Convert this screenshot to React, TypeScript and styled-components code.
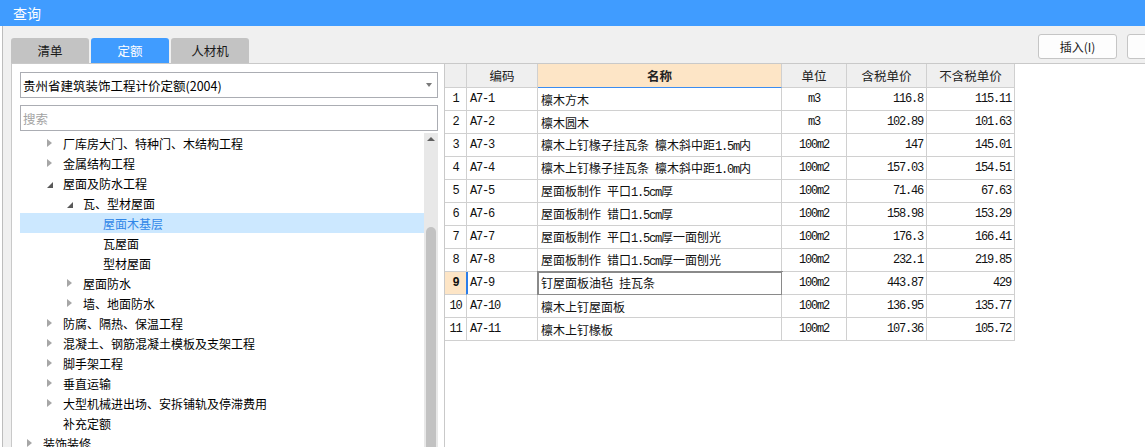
import React from "react";
import styled, { createGlobalStyle } from "styled-components";

const GlobalStyle = createGlobalStyle`
  html, body {
    margin: 0;
    padding: 0;
    background: #fff;
    overflow: hidden;
  }
  body {
    font-family: "Noto Sans CJK SC", "Noto Sans", sans-serif;
    font-size: 12px;
    color: #000;
  }
  * { box-sizing: border-box; }
`;

const Window = styled.div`
  width: 1210px;
  height: 447px;
  display: flex;
  flex-direction: column;
  overflow: hidden;
`;

const TitleBar = styled.div`
  flex: none;
  height: 26px;
  line-height: 26px;
  padding-left: 13px;
  background: #409cff;
  color: #fff;
  font-size: 14px;
`;

const Body = styled.div`
  flex: 1;
  min-height: 0;
  display: flex;
  margin-left: 2px;
  padding-left: 8px;
  border-left: 1px solid #bdbdbd;
  background: #f0f0f0;
`;

const LeftColumn = styled.div`
  flex: none;
  width: 434px;
  display: flex;
  flex-direction: column;
`;

const Tabs = styled.div`
  display: flex;
  gap: 2px;
  height: 25px;
  margin-top: 12px;
`;

const Tab = styled.div<{ $active?: boolean }>`
  width: 78px;
  display: flex;
  align-items: center;
  justify-content: center;
  border-radius: 3px 3px 0 0;
  background: ${(p) => (p.$active ? "#409cff" : "#c3c3c3")};
  color: ${(p) => (p.$active ? "#fff" : "#1a1a1a")};
  font-size: 12.5px;
`;

const Panel = styled.div`
  flex: 1;
  min-height: 0;
  display: flex;
  flex-direction: column;
  padding: 8px 6px 0 8px;
  background: #fff;
  border: 1px solid #c9c9c9;
  border-bottom: none;
`;

const Field = styled.div`
  flex: none;
  height: 26px;
  display: flex;
  align-items: center;
  justify-content: space-between;
  padding: 0 5px 0 2px;
  border: 1px solid #abadb3;
  font-size: 12.5px;
  & + & {
    margin-top: 7px;
  }
`;

const Placeholder = styled.span`
  color: #a3a3a3;
`;

const Tree = styled.div`
  flex: 1;
  min-height: 0;
  display: flex;
  margin-top: 2px;
  overflow: hidden;
`;

const TreeList = styled.div`
  flex: 1;
  min-width: 0;
`;

const TreeRow = styled.div<{ $level: number; $selected?: boolean }>`
  height: 20px;
  display: flex;
  align-items: center;
  padding-left: ${(p) => 3 + p.$level * 20}px;
  white-space: nowrap;
  background: ${(p) => (p.$selected ? "#cce8ff" : "transparent")};
  color: ${(p) => (p.$selected ? "#2f86e8" : "#000")};
`;

const Toggle = styled.span<{ $open?: boolean }>`
  flex: none;
  width: 20px;
  height: 20px;
  display: flex;
  align-items: center;
  padding-left: 4px;
  padding-top: ${(p) => (p.$open ? 4 : 0)}px;
`;

const ScrollTrack = styled.div`
  flex: none;
  width: 14px;
  display: flex;
  flex-direction: column;
  align-items: center;
  background: #e8e8e8;
`;

const ScrollThumb = styled.div`
  flex: 1;
  width: 10px;
  margin-top: 86px;
  border-radius: 5px 5px 0 0;
  background: #c2c2c2;
`;

const RightColumn = styled.div`
  flex: 1;
  min-width: 0;
  display: flex;
  flex-direction: column;
`;

const Toolbar = styled.div`
  flex: none;
  height: 37px;
  display: flex;
  justify-content: flex-end;
  align-items: flex-start;
  gap: 10px;
  padding: 8px 4px 0 0;
`;

const Button = styled.div`
  width: 79px;
  height: 25px;
  display: flex;
  align-items: center;
  justify-content: center;
  border: 1px solid #c5c5c5;
  border-radius: 3px;
  background: #fdfdfd;
  color: #1a1a1a;
  font-size: 12px;
`;

const TableArea = styled.div`
  flex: 1;
  background: #fff;
  border-top: 1px solid #c9c9c9;
`;

const Grid = styled.div`
  display: grid;
  grid-template-columns: 22px 71px 244px 65px 80px 88px;
  width: max-content;
`;

type Align = "left" | "center" | "right";

const HeadCell = styled.div<{ $hot?: boolean }>`
  height: 24px;
  display: flex;
  align-items: center;
  justify-content: center;
  border-right: 1px solid #d0d0d0;
  border-bottom: 1px solid ${(p) => (p.$hot ? "#3b8cf0" : "#d0d0d0")};
  background: ${(p) => (p.$hot ? "#fde5c6" : "#efefef")};
  font-size: 12.5px;
  font-weight: ${(p) => (p.$hot ? 700 : 400)};
  color: #222;
`;

const Cell = styled.div<{ $align?: Align; $mark?: boolean; $cursor?: boolean; $focus?: boolean }>`
  height: 23px;
  display: flex;
  align-items: center;
  justify-content: ${(p) => (p.$align === "right" ? "flex-end" : p.$align === "center" ? "center" : "flex-start")};
  padding: 0 3px;
  border-right: 1px solid ${(p) => (p.$mark ? "#2b7de9" : "#d0d0d0")};
  border-bottom: 1px solid #d0d0d0;
  background: ${(p) => (p.$mark ? "#fde5c6" : "#fff")};
  font-weight: ${(p) => (p.$mark ? 700 : 400)};
  box-shadow: ${(p) => (p.$cursor ? "inset 1px 0 0 #2b7de9" : "none")};
  outline: ${(p) => (p.$focus ? "2px solid #8a8a8a" : "none")};
  outline-offset: -1px;
  white-space: pre;
  overflow: hidden;
  font-size: 12px;
  color: #111;
`;

const Half = styled.span`
  font-family: "Liberation Mono", "DejaVu Sans Mono", monospace;
  letter-spacing: -1.2px;
`;

// one inline run, so CJK and half-width pieces share a baseline
const Mixed = ({ text }: { text: string }) => (
  <span>
    {text.split(/([\x20-\x7e]+)/).map((part, i) =>
      /^[\x20-\x7e]+$/.test(part) ? <Half key={i}>{part}</Half> : part
    )}
  </span>
);

const Collapsed = () => (
  <svg width="5" height="8" viewBox="0 0 5 8">
    <polygon points="0,0 5,4 0,8" fill="#a6a6a6" />
  </svg>
);

const Expanded = () => (
  <svg width="6" height="6" viewBox="0 0 6 6">
    <polygon points="6,0 6,6 0,6" fill="#595959" />
  </svg>
);

interface Node {
  label: string;
  level: number;
  state?: "open" | "closed";
  selected?: boolean;
}

const nodes: Node[] = [
  { label: "厂库房大门、特种门、木结构工程", level: 1, state: "closed" },
  { label: "金属结构工程", level: 1, state: "closed" },
  { label: "屋面及防水工程", level: 1, state: "open" },
  { label: "瓦、型材屋面", level: 2, state: "open" },
  { label: "屋面木基层", level: 3, selected: true },
  { label: "瓦屋面", level: 3 },
  { label: "型材屋面", level: 3 },
  { label: "屋面防水", level: 2, state: "closed" },
  { label: "墙、地面防水", level: 2, state: "closed" },
  { label: "防腐、隔热、保温工程", level: 1, state: "closed" },
  { label: "混凝土、钢筋混凝土模板及支架工程", level: 1, state: "closed" },
  { label: "脚手架工程", level: 1, state: "closed" },
  { label: "垂直运输", level: 1, state: "closed" },
  { label: "大型机械进出场、安拆铺轨及停滞费用", level: 1, state: "closed" },
  { label: "补充定额", level: 1 },
  { label: "装饰装修", level: 0, state: "closed" },
];

const rows = [
  ["A7-1", "檩木方木", "m3", "116.8", "115.11"],
  ["A7-2", "檩木圆木", "m3", "102.89", "101.63"],
  ["A7-3", "檩木上钉椽子挂瓦条 檩木斜中距1.5m内", "100m2", "147", "145.01"],
  ["A7-4", "檩木上钉椽子挂瓦条 檩木斜中距1.0m内", "100m2", "157.03", "154.51"],
  ["A7-5", "屋面板制作 平口1.5cm厚", "100m2", "71.46", "67.63"],
  ["A7-6", "屋面板制作 错口1.5cm厚", "100m2", "158.98", "153.29"],
  ["A7-7", "屋面板制作 平口1.5cm厚一面刨光", "100m2", "176.3", "166.41"],
  ["A7-8", "屋面板制作 错口1.5cm厚一面刨光", "100m2", "232.1", "219.85"],
  ["A7-9", "钉屋面板油毡 挂瓦条", "100m2", "443.87", "429"],
  ["A7-10", "檩木上钉屋面板", "100m2", "136.95", "135.77"],
  ["A7-11", "檩木上钉椽板", "100m2", "107.36", "105.72"],
];

const current = 8;

export default function App() {
  return (
    <Window>
      <GlobalStyle />
      <TitleBar>查询</TitleBar>
      <Body>
        <LeftColumn>
          <Tabs>
            <Tab>清单</Tab>
            <Tab $active>定额</Tab>
            <Tab>人材机</Tab>
          </Tabs>
          <Panel>
            <Field>
              <span>贵州省建筑装饰工程计价定额(2004)</span>
              <svg width="6" height="4" viewBox="0 0 6 4">
                <polygon points="0,0 6,0 3,4" fill="#7a7a7a" />
              </svg>
            </Field>
            <Field>
              <Placeholder>搜索</Placeholder>
            </Field>
            <Tree>
              <TreeList>
                {nodes.map((n) => (
                  <TreeRow key={n.label} $level={n.level} $selected={n.selected}>
                    <Toggle $open={n.state === "open"}>
                      {n.state === "open" && <Expanded />}
                      {n.state === "closed" && <Collapsed />}
                    </Toggle>
                    {n.label}
                  </TreeRow>
                ))}
              </TreeList>
              <ScrollTrack>
                <svg width="8" height="4" viewBox="0 0 8 4" style={{ marginTop: 4 }}>
                  <polygon points="0,4 8,4 4,0" fill="#606060" />
                </svg>
                <ScrollThumb />
              </ScrollTrack>
            </Tree>
          </Panel>
        </LeftColumn>
        <RightColumn>
          <Toolbar>
            <Button>插入(I)</Button>
            <Button />
          </Toolbar>
          <TableArea>
            <Grid>
              <HeadCell />
              <HeadCell>编码</HeadCell>
              <HeadCell $hot>名称</HeadCell>
              <HeadCell>单位</HeadCell>
              <HeadCell>含税单价</HeadCell>
              <HeadCell>不含税单价</HeadCell>
              {rows.map((r, i) => (
                <React.Fragment key={r[0]}>
                  <Cell $align="center" $mark={i === current}>
                    <Half>{i + 1}</Half>
                  </Cell>
                  <Cell $cursor={i === current}>
                    <Half>{r[0]}</Half>
                  </Cell>
                  <Cell $focus={i === current}>
                    <Mixed text={r[1]} />
                  </Cell>
                  <Cell $align="center">
                    <Half>{r[2]}</Half>
                  </Cell>
                  <Cell $align="right">
                    <Half>{r[3]}</Half>
                  </Cell>
                  <Cell $align="right">
                    <Half>{r[4]}</Half>
                  </Cell>
                </React.Fragment>
              ))}
            </Grid>
          </TableArea>
        </RightColumn>
      </Body>
    </Window>
  );
}
